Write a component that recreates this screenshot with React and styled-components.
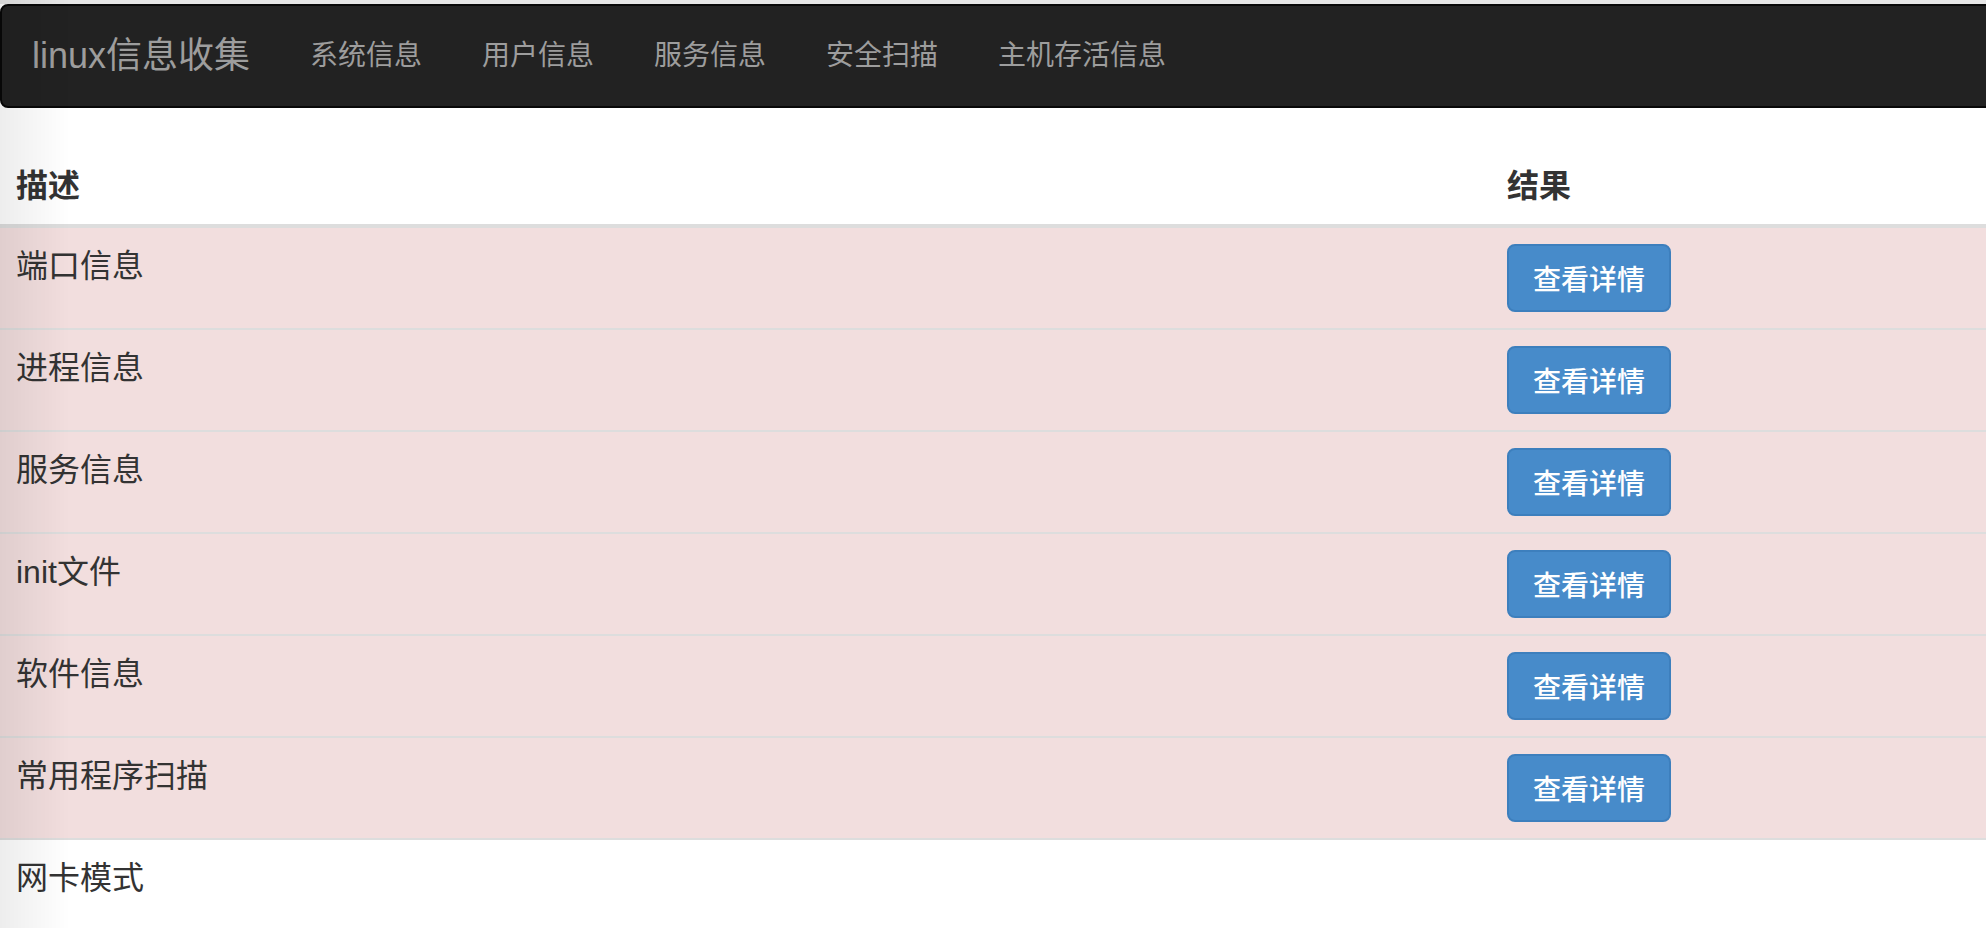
import React from "react";
import styled, { createGlobalStyle } from "styled-components";

const GlobalStyle = createGlobalStyle`
  html, body {
    margin: 0;
    padding: 0;
    background: #fff;
    overflow-x: hidden;
  }
  body {
    border-top: 4px solid #e6e6e6;
    font-family: "Liberation Sans", "Noto Sans CJK SC", sans-serif;
    color: #333;
  }
  body::before {
    content: "";
    position: fixed;
    top: 0;
    left: 0;
    bottom: 0;
    width: 70px;
    background: linear-gradient(to right, rgba(0, 0, 0, 0.07), rgba(0, 0, 0, 0));
    pointer-events: none;
    z-index: 5;
  }
`;

const Page = styled.div`
  margin-right: -20px;
`;

const Navbar = styled.nav`
  display: flex;
  align-items: center;
  min-height: 100px;
  background: #222;
  border: 2px solid #080808;
  border-radius: 8px;
  margin-bottom: 40px;
`;

const Brand = styled.a`
  padding: 0 30px;
  font-size: 36px;
  line-height: 40px;
  color: #9d9d9d;
  text-decoration: none;
`;

const NavLink = styled.a`
  padding: 0 30px;
  font-size: 28px;
  line-height: 40px;
  color: #9d9d9d;
  text-decoration: none;
`;

const Table = styled.table`
  width: 100%;
  border-collapse: collapse;
  table-layout: fixed;
  font-size: 32px;
`;

const Th = styled.th`
  text-align: left;
  font-weight: bold;
  padding: 16px;
  line-height: 44px;
  vertical-align: bottom;
  border-bottom: 4px solid #ddd;
  width: ${(p) => p.$w || "auto"};
`;

const Row = styled.tr`
  background: ${(p) => (p.$danger ? "#f2dede" : "transparent")};
`;

const Td = styled.td`
  padding: 16px;
  line-height: 44px;
  vertical-align: top;
  border-top: 2px solid #ddd;
`;

const Button = styled.button`
  display: inline-block;
  padding: 12px 24px;
  font-family: "Noto Sans CJK SC", sans-serif;
  font-size: 28px;
  font-weight: 500;
  line-height: 40px;
  color: #fff;
  background: #478bca;
  border: 2px solid #3d7fbd;
  border-radius: 8px;
  cursor: pointer;
`;

const menus = ["系统信息", "用户信息", "服务信息", "安全扫描", "主机存活信息"];

const rows = [
  { name: "端口信息", btn: true },
  { name: "进程信息", btn: true },
  { name: "服务信息", btn: true },
  { name: "init文件", btn: true },
  { name: "软件信息", btn: true },
  { name: "常用程序扫描", btn: true },
  { name: "网卡模式", btn: false },
];

export default function App() {
  return (
    <Page>
      <GlobalStyle />
      <Navbar>
        <Brand href="#">linux信息收集</Brand>
        {menus.map((m) => (
          <NavLink key={m} href="#">{m}</NavLink>
        ))}
      </Navbar>

      <Table>
        <thead>
          <tr>
            <Th $w="1459px">描述</Th>
            <Th>结果</Th>
          </tr>
        </thead>
        <tbody>
          {rows.map((r) => (
            <Row key={r.name} $danger={r.btn}>
              <Td>{r.name}</Td>
              <Td>{r.btn && <Button>查看详情</Button>}</Td>
            </Row>
          ))}
        </tbody>
      </Table>
    </Page>
  );
}
